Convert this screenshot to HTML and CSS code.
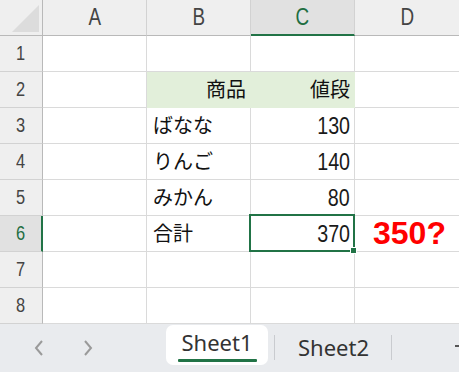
FILE: index.html
```html
<!DOCTYPE html>
<html lang="ja">
<head>
  <meta charset="UTF-8" />
  <meta name="viewport" content="width=device-width, initial-scale=1.0"/>
  <title>Book1 - Excel</title>
  <link rel="stylesheet" href="styles.css">
</head>
<body>
  <div id="sheet">
    <div class="grid">
      <div class="cell corner">
        <svg width="42" height="35" viewBox="0 0 42 35"><polygon points="12,32 39,32 39,5" fill="#dcdcdc"/></svg>
      </div>
      <div class="cell hd"><span class="narrow">A</span></div>
      <div class="cell hd"><span class="narrow">B</span></div>
      <div class="cell hd sel-col"><span class="narrow">C</span></div>
      <div class="cell hd"><span class="narrow">D</span></div>

      <div class="cell rh"><span class="narrow">1</span></div>
      <div class="cell"></div>
      <div class="cell"></div>
      <div class="cell"></div>
      <div class="cell"></div>

      <div class="cell rh"><span class="narrow">2</span></div>
      <div class="cell"></div>
      <div class="cell txt right fill">商品</div>
      <div class="cell txt right fill">値段</div>
      <div class="cell"></div>

      <div class="cell rh"><span class="narrow">3</span></div>
      <div class="cell"></div>
      <div class="cell txt">ばなな</div>
      <div class="cell num"><span class="val">130</span></div>
      <div class="cell"></div>

      <div class="cell rh"><span class="narrow">4</span></div>
      <div class="cell"></div>
      <div class="cell txt">りんご</div>
      <div class="cell num"><span class="val">140</span></div>
      <div class="cell"></div>

      <div class="cell rh"><span class="narrow">5</span></div>
      <div class="cell"></div>
      <div class="cell txt">みかん</div>
      <div class="cell num"><span class="val">80</span></div>
      <div class="cell"></div>

      <div class="cell rh sel-row"><span class="narrow">6</span></div>
      <div class="cell"></div>
      <div class="cell txt">合計</div>
      <div class="cell num active"><span class="val">370</span><span class="handle"></span></div>
      <div class="cell note">350?</div>

      <div class="cell rh"><span class="narrow">7</span></div>
      <div class="cell"></div>
      <div class="cell"></div>
      <div class="cell"></div>
      <div class="cell"></div>

      <div class="cell rh"><span class="narrow">8</span></div>
      <div class="cell"></div>
      <div class="cell"></div>
      <div class="cell"></div>
      <div class="cell"></div>
    </div>

    <div class="tabs">
      <div class="nav">
        <svg class="arrow" width="10" height="16" viewBox="0 0 10 16"><polyline points="8,1 2,8 8,15" fill="none" stroke="#9a9a9a" stroke-width="2"/></svg>
        <svg class="arrow" width="10" height="16" viewBox="0 0 10 16"><polyline points="2,1 8,8 2,15" fill="none" stroke="#9a9a9a" stroke-width="2"/></svg>
      </div>
      <div class="tab current">
        <span class="tab-name">Sheet1</span>
        <span class="tab-line"></span>
      </div>
      <div class="sep"></div>
      <div class="tab other">
        <span class="tab-name">Sheet2</span>
      </div>
      <div class="sep last"></div>
      <svg class="add" width="18" height="18" viewBox="0 0 18 18"><path d="M1 9H17M9 1V17" stroke="#555" stroke-width="2"/></svg>
    </div>
  </div>
</body>
</html>
```

FILE: styles.css
```css
* {
  margin: 0;
  padding: 0;
  box-sizing: border-box;
}
html, body {
  width: 100%;
  height: 100%;
  overflow: hidden;
  background: white;
  font-family: "Noto Sans CJK JP", sans-serif;
}
#sheet {
  width: 459px;
  height: 372px;
  display: flex;
  flex-direction: column;
  overflow: hidden;
}

.grid {
  display: grid;
  grid-template-columns: 43px 104px 104px 104px 105px;
  grid-auto-rows: 36px;
}

.cell {
  position: relative;
  display: flex;
  align-items: center;
  border-right: 1px solid #dadada;
  border-bottom: 1px solid #dadada;
  font-size: 20px;
  color: #111;
}

.corner,
.hd,
.rh {
  background: #efefef;
  justify-content: center;
  color: #444;
  font-family: "Liberation Sans", sans-serif;
}
.narrow {
  display: inline-block;
  transform: scaleX(0.82);
}
.corner {
  align-items: stretch;
  border-right-color: #b9b9b9;
  border-bottom-color: #b9b9b9;
}
.hd {
  font-size: 23px;
  border-right-color: #d2d2d2;
  border-bottom-color: #b9b9b9;
}
.rh {
  font-size: 20px;
  border-right-color: #b9b9b9;
  border-bottom-color: #d2d2d2;
}
.sel-col {
  background: #e1e1e1;
  color: #1e6e42;
  border-bottom: 2px solid #217346;
}
.sel-row {
  background: #e1e1e1;
  color: #1e6e42;
  border-right: 2px solid #217346;
}

.txt {
  padding: 0 4px 2px 6px;
}
.right {
  justify-content: flex-end;
}
.fill {
  background: #e2efda;
  border-right-color: #e2efda;
  border-bottom-color: #e2efda;
}
.num {
  justify-content: flex-end;
  padding-right: 4px;
  font-family: "Liberation Sans", sans-serif;
  font-size: 24px;
  color: #1a1a1a;
}
.val {
  display: inline-block;
  transform: scaleX(0.82);
  transform-origin: right center;
}

.active {
  z-index: 2;
}
.active::after {
  content: "";
  position: absolute;
  top: -2px;
  left: -2px;
  right: -1px;
  bottom: -1px;
  border: 2px solid #217346;
}
.handle {
  position: absolute;
  right: -3px;
  bottom: -3px;
  width: 7px;
  height: 7px;
  background: #217346;
  border: 1px solid white;
  z-index: 3;
}

.note {
  padding-left: 18px;
  font-family: "Liberation Sans", Arial, sans-serif;
  font-weight: bold;
  font-size: 32px;
  color: #ff0000;
}

.tabs {
  flex: 1;
  display: flex;
  align-items: flex-start;
  background: #e9ebee;
}
.tabs > * {
  flex: none;
}
.nav {
  width: 166px;
  height: 48px;
  display: flex;
  align-items: center;
  gap: 39px;
  padding-left: 34px;
}
.tab {
  display: flex;
  flex-direction: column;
  align-items: center;
  font-family: "Noto Sans", sans-serif;
  font-size: 22px;
  color: #333;
}
.tab-name {
  line-height: 22px;
}
.tab.current {
  width: 102px;
  height: 40px;
  margin-top: 1px;
  padding-top: 6px;
  background: white;
  border-radius: 7px;
}
.tab-line {
  width: 79px;
  height: 3px;
  margin-top: 6px;
  background: #217346;
  border-radius: 1px;
}
.tab.other {
  padding: 12px 22px 0 23px;
}
.sep {
  width: 1px;
  height: 25px;
  margin: 11px 0 0 6px;
  background: #c9cbcf;
}
.sep.last {
  margin-left: 0;
}
.add {
  margin: 13px 0 0 62px;
}
```
